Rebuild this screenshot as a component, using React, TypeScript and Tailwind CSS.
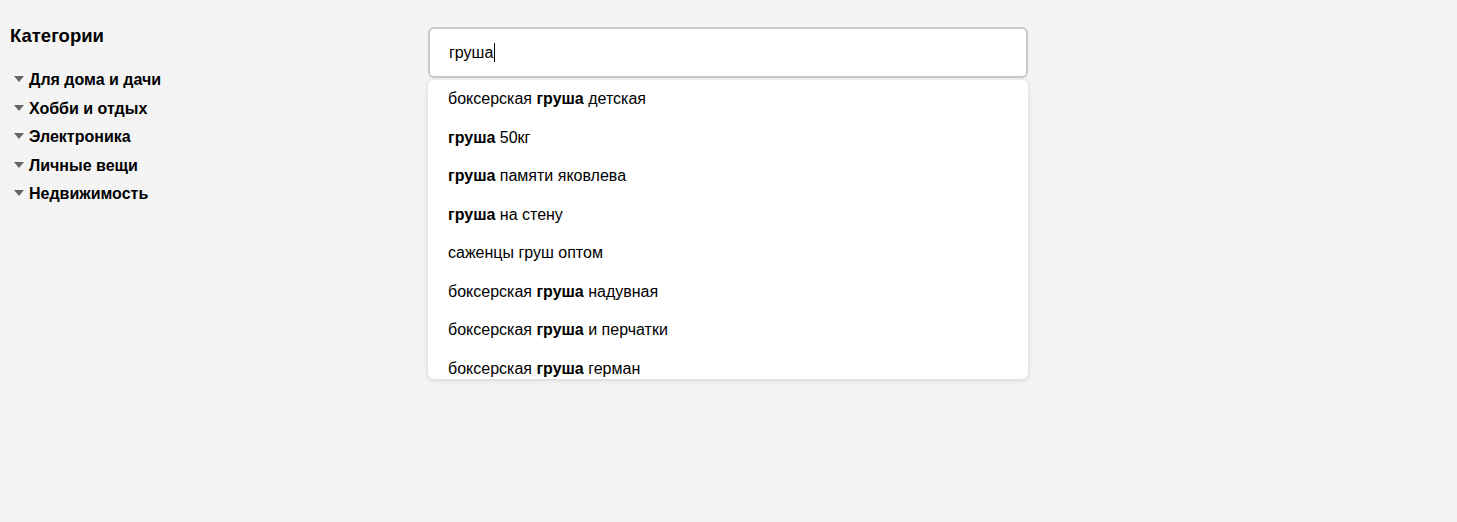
const categories = ["Для дома и дачи", "Хобби и отдых", "Электроника", "Личные вещи", "Недвижимость"];

const suggestions: [string, string, string][] = [
  ["боксерская ", "груша", " детская"],
  ["", "груша", " 50кг"],
  ["", "груша", " памяти яковлева"],
  ["", "груша", " на стену"],
  ["саженцы груш оптом", "", ""],
  ["боксерская ", "груша", " надувная"],
  ["боксерская ", "груша", " и перчатки"],
  ["боксерская ", "груша", " герман"],
];

function Sidebar() {
  return (
    <div className="w-[428px] shrink-0 pl-[10px] pt-[25px]">
      <h2 className="text-[18.5px] font-bold leading-[22px] text-black">Категории</h2>
      <ul className="mt-[19px] flex flex-col">
        {categories.map((c) => (
          <li key={c} className="flex items-center h-[28.5px]">
            <svg width="10" height="6" viewBox="0 0 10 6" className="ml-[4px] mr-[5px] -mt-[2px]">
              <path d="M0 0 L10 0 L5 6 Z" fill="#666" />
            </svg>
            <span className="text-[16px] font-bold text-black">{c}</span>
          </li>
        ))}
      </ul>
    </div>
  );
}

function Search() {
  return (
    <div className="w-[600px] pt-[27px]">
      <div className="h-[51px] rounded-[6px] border-2 border-[#c9c9c9] bg-white flex items-center px-[19px]">
        <span className="text-[16px] text-black">груша</span>
        <span className="w-px h-[19px] bg-black ml-[1px]" />
      </div>
      <ul className="mt-[2px] max-h-[299px] overflow-hidden rounded-[6px] bg-white shadow-[0_1px_5px_rgba(0,0,0,0.15)]">
        {suggestions.map(([a, b, c], i) => (
          <li key={i} className="px-[20px] h-[38.5px] flex items-center text-[16px] text-black whitespace-pre">
            {a}
            {b && <b>{b}</b>}
            {c}
          </li>
        ))}
      </ul>
    </div>
  );
}

export default function App() {
  return (
    <div className="min-h-[522px] bg-[#f4f4f4] flex" style={{ fontFamily: '"Liberation Sans", Arial, sans-serif' }}>
      <Sidebar />
      <Search />
    </div>
  );
}
